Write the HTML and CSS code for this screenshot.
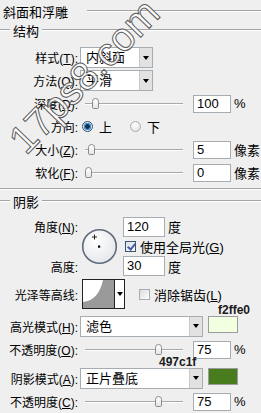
FILE: index.html
```html
<!DOCTYPE html>
<html lang="zh-CN">
<head>
  <meta charset="utf-8"/>
  <title>斜面和浮雕</title>
  <link rel="stylesheet" href="styles.css">
</head>
<body>
<div class="panel">

  <div class="title">斜面和浮雕<i class="rule"></i></div>
  <div class="legend"><span>结构</span></div>

  <div class="row">
    <label class="lbl">样式(<u>T</u>):</label>
    <div class="select w-short"><span>内斜面</span><b class="drop"></b></div>
  </div>
  <div class="row">
    <label class="lbl">方法(<u>Q</u>):</label>
    <div class="select w-short"><span>平滑</span><b class="drop"></b></div>
  </div>
  <div class="row">
    <label class="lbl">深度(<u>D</u>):</label>
    <div class="slider"><b class="thumb" style="left:7px"></b></div>
    <div class="num">100</div><span class="unit">%</span>
  </div>
  <div class="row">
    <label class="lbl">方向:</label>
    <span class="radio on"></span><span class="opt">上</span>
    <span class="radio gap"></span><span class="opt">下</span>
  </div>
  <div class="row">
    <label class="lbl">大小(<u>Z</u>):</label>
    <div class="slider"><b class="thumb" style="left:3px"></b></div>
    <div class="num">5</div><span class="unit">像素</span>
  </div>
  <div class="row">
    <label class="lbl">软化(<u>F</u>):</label>
    <div class="slider"><b class="thumb" style="left:0px"></b></div>
    <div class="num">0</div><span class="unit">像素</span>
  </div>

  <hr class="sep">

  <div class="legend"><span>阴影</span></div>

  <div class="angle">
    <label class="lbl">角度(<u>N</u>):</label>
    <svg class="dial" width="37" height="37" viewBox="0 0 37 37">
      <defs>
        <radialGradient id="dg" cx="0.4" cy="0.35" r="0.7">
          <stop offset="0" stop-color="#ffffff"/>
          <stop offset="1" stop-color="#e4e6ea"/>
        </radialGradient>
      </defs>
      <circle cx="18.5" cy="18.5" r="16.8" fill="url(#dg)" stroke="#5f6b7a" stroke-width="1.6"/>
      <path d="M13.5 6.5v5M11 9h5" stroke="#222" stroke-width="1"/>
      <rect x="17" y="17.5" width="2.2" height="2.2" fill="#000"/>
    </svg>
    <div class="cell"><div class="num">120</div><span class="unit">度</span></div>
    <div class="cell check-cell"><span class="check on"></span><span>使用全局光(<u>G</u>)</span></div>
    <label class="lbl">高度:</label>
    <div class="cell"><div class="num">30</div><span class="unit">度</span></div>
  </div>

  <div class="row contour-row">
    <label class="lbl">光泽等高线:</label>
    <div class="contour">
      <svg width="31" height="28" viewBox="0 0 31 28">
        <rect width="31" height="28" fill="#fff"/>
        <path d="M0 28V22C11 21 17 13 20 0H31V28Z" fill="#9a9a9a"/>
      </svg>
      <b class="drop"></b>
    </div>
    <span class="check"></span><span>消除锯齿(<u>L</u>)</span>
  </div>

  <div class="row mode-row">
    <label class="lbl">高光模式(<u>H</u>):</label>
    <div class="select w-long"><span>滤色</span><b class="drop"></b></div>
    <div class="swatch light"><em class="hex">f2ffe0</em></div>
  </div>
  <div class="row">
    <label class="lbl">不透明度(<u>O</u>):</label>
    <div class="slider"><b class="thumb" style="left:70px"></b></div>
    <div class="num">75</div><span class="unit">%</span>
  </div>
  <div class="row mode-row">
    <label class="lbl">阴影模式(<u>A</u>):</label>
    <div class="select w-long"><span>正片叠底</span><b class="drop"></b></div>
    <div class="swatch dark"><em class="hex hex-left">497c1f</em></div>
  </div>
  <div class="row">
    <label class="lbl">不透明度(<u>C</u>):</label>
    <div class="slider"><b class="thumb" style="left:70px"></b></div>
    <div class="num">75</div><span class="unit">%</span>
  </div>

  <span class="watermark">17ps8.com</span>
</div>
</body>
</html>
```

FILE: styles.css
```css
body {
  margin: 0;
  background-color: #efefef;
  color: #000;
  font: 12px "Liberation Sans", "Noto Sans CJK SC", sans-serif;
}

.panel {
  position: relative;
  width: 261px;
  height: 413px;
  overflow: hidden;
}

u {
  text-decoration: underline;
}

.title {
  display: flex;
  align-items: center;
  height: 22px;
  padding-left: 3px;
  font-size: 13px;
}

.title .rule {
  flex: 1;
  margin-left: 19px;
  border-top: 1px solid #a3a3a3;
  border-bottom: 1px solid #fff;
}

.legend {
  display: flex;
  align-items: center;
  height: 16px;
  font-size: 13px;
  margin-bottom: 8px;
}

.legend::before,
.legend::after {
  content: "";
  border-top: 1px solid #a3a3a3;
  border-bottom: 1px solid #fff;
}

.legend::before {
  width: 10px;
}

.legend::after {
  flex: 1;
}

.legend span {
  padding: 0 3px;
}

.row {
  display: flex;
  align-items: center;
  height: 23px;
}

.lbl {
  flex: none;
  width: 78px;
  text-align: right;
  white-space: nowrap;
}

.select {
  display: flex;
  height: 21px;
  margin-left: 2px;
  box-sizing: border-box;
  border: 1px solid #a5acb2;
  background: #fff;
}

.select span {
  flex: 1;
  padding-left: 5px;
  line-height: 19px;
  font-size: 13px;
}

.w-short {
  width: 73px;
}

.w-long {
  width: 123px;
}

.drop {
  flex: none;
  width: 12px;
  display: flex;
  align-items: center;
  justify-content: center;
  background: #e2e2e2;
  border-left: 1px solid #c9c9c9;
}

.drop::after {
  content: "";
  border-left: 3px solid transparent;
  border-right: 3px solid transparent;
  border-top: 4px solid #000;
}

.slider {
  position: relative;
  flex: none;
  width: 98px;
  height: 14px;
  margin-left: 7px;
}

.slider::before {
  content: "";
  position: absolute;
  left: 0;
  right: 0;
  top: 6px;
  border-top: 1px solid #a8a8a8;
  border-bottom: 1px solid #fff;
}

.thumb {
  position: absolute;
  top: 1px;
  width: 7px;
  height: 11px;
  box-sizing: border-box;
  border: 1px solid #8a8a8a;
  border-radius: 4px 4px 2px 2px;
  background: linear-gradient(#ffffff, #e6e6e6);
}

.num {
  flex: none;
  width: 38px;
  height: 18px;
  margin-left: 10px;
  box-sizing: border-box;
  border: 1px solid #a5acb2;
  background: #fff;
  padding-left: 3px;
  line-height: 16px;
  font-size: 13px;
}

.unit {
  margin-left: 3px;
  font-size: 13px;
  white-space: nowrap;
}

.radio {
  flex: none;
  width: 11px;
  height: 11px;
  margin-left: 4px;
  box-sizing: border-box;
  border-radius: 50%;
  border: 1px solid #a9adb3;
  background: radial-gradient(circle at 40% 35%, #ffffff, #dcdcdc);
}

.radio.on {
  border-color: #33506e;
  background: radial-gradient(circle, #0b2f4f 0 2px, #4d8fc4 2.5px 3.5px, #dbe8f3 4px);
}

.radio.gap {
  margin-left: 18px;
}

.opt {
  margin-left: 6px;
  font-size: 13px;
}

.sep {
  margin: 4px 0 3px;
  border: none;
  border-top: 1px solid #a3a3a3;
  border-bottom: 1px solid #fff;
}

.angle {
  display: grid;
  grid-template-columns: 78px 45px auto;
  grid-template-rows: 21px 19px 20px;
  align-items: center;
  margin-top: -1px;
}

.angle .lbl:first-child {
  grid-row: 1;
}

.angle .lbl {
  grid-column: 1;
  grid-row: 3;
}

.dial {
  grid-column: 2;
  grid-row: 1 / 4;
  margin-left: 3px;
}

.cell {
  grid-column: 3;
  display: flex;
  align-items: center;
}

.cell .num {
  margin-left: 0;
  width: 42px;
  height: 20px;
  line-height: 18px;
}

.check-cell {
  grid-row: 2;
  margin-left: 2px;
}

.check-cell span:last-child {
  margin-left: 4px;
  font-size: 13px;
}

.check {
  flex: none;
  width: 11px;
  height: 11px;
  box-sizing: border-box;
  border: 1px solid #a9adb3;
  background: linear-gradient(135deg, #dcdcdc, #ffffff);
}

.check.on {
  position: relative;
  border-color: #3b5574;
  background: linear-gradient(135deg, #d9dfe8, #ffffff);
}

.check.on::after {
  content: "";
  position: absolute;
  left: 3px;
  top: 0px;
  width: 3px;
  height: 6px;
  border-right: 2px solid #4a58a8;
  border-bottom: 2px solid #4a58a8;
  transform: rotate(40deg);
}

.contour-row {
  height: 30px;
  margin-top: 3px;
}

.contour-row .check {
  margin-left: 14px;
}

.contour-row .check + span {
  margin-left: 4px;
  font-size: 13px;
}

.contour {
  display: flex;
  margin-left: 4px;
  border: 1px solid #222;
  background: #fff;
}

.contour svg {
  display: block;
}

.contour .drop {
  width: 9px;
  background: #fff;
  border-left: 1px solid #222;
}

.mode-row {
  height: 24px;
  margin-top: 5px;
}

.swatch {
  position: relative;
  flex: none;
  width: 30px;
  height: 17px;
  margin: -4px 0 0 5px;
  box-sizing: border-box;
  border: 1px solid #9c9c9c;
}

.swatch.light {
  background: #f2ffe0;
}

.swatch.dark {
  background: #497c1f;
}

.hex {
  position: absolute;
  left: 9px;
  top: -14px;
  font: bold 12px "Liberation Sans", sans-serif;
  color: #1a1a1a;
}

.hex-left {
  left: -50px;
  top: -14px;
}

.watermark {
  position: absolute;
  left: -14px;
  top: 53px;
  font: 40px "Liberation Sans", sans-serif;
  line-height: 46px;
  color: rgba(255, 255, 255, 0.9);
  -webkit-text-stroke: 1px #5a5a5a;
  transform: rotate(-46deg);
  white-space: nowrap;
}
```
